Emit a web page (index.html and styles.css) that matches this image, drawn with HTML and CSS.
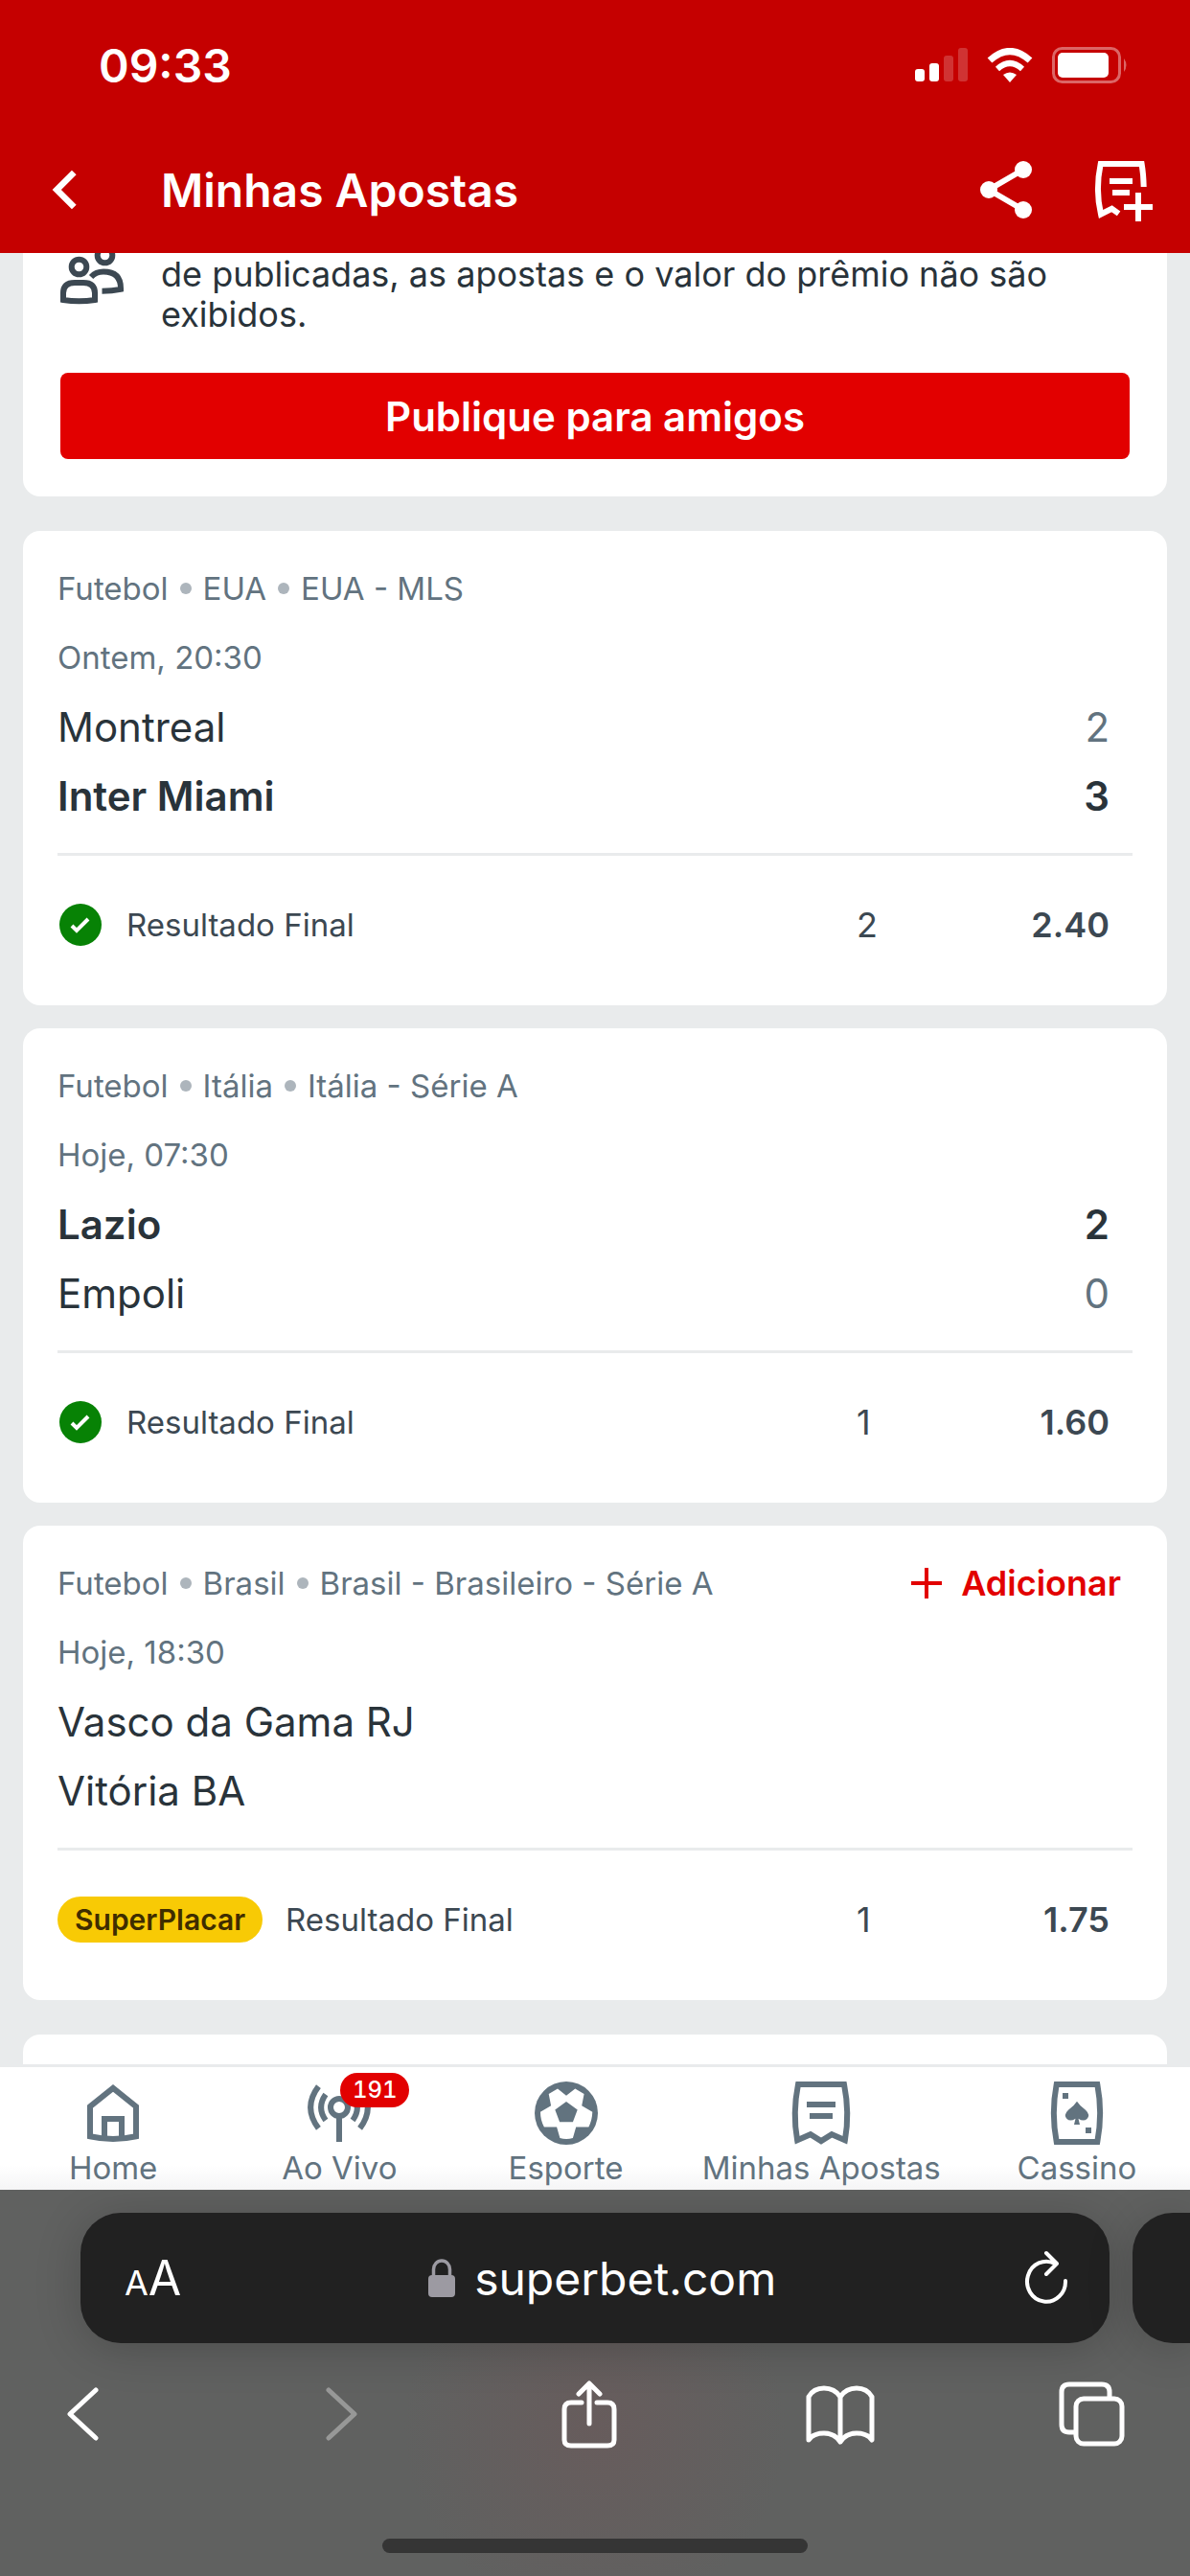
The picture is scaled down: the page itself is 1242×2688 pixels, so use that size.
FILE: index.html
```html
<!DOCTYPE html>
<html lang="pt-BR">

<head>
  <meta charset="UTF-8">
  <meta name="viewport" content="width=device-width, initial-scale=1">
  <title>Minhas Apostas</title>
  <link rel="stylesheet" href="styles.css">
</head>

<body>
  <header class="top">
    <div class="status">
      <span class="time">09:33</span>
      <div class="status-icons">
        <svg width="56" height="36" viewBox="0 0 56 36" fill="#fff">
          <rect x="1" y="22" width="10" height="13" rx="3" />
          <rect x="16" y="16" width="10" height="19" rx="3" />
          <rect x="31" y="8" width="10" height="27" rx="3" opacity=".2" />
          <rect x="46" y="0" width="10" height="35" rx="3" opacity=".2" />
        </svg>
        <svg width="48" height="36" viewBox="0 0 48 36" fill="none" stroke="#fff" stroke-width="7">
          <path d="M3 13Q24 -6 45 13" />
          <path d="M11 22Q24 10 37 22" stroke-width="6" />
          <path d="M17 28Q24 23 31 28L24 36Z" fill="#fff" stroke="none" />
        </svg>
        <svg width="80" height="38" viewBox="0 0 80 38">
          <rect x="1.5" y="1.5" width="69" height="35" rx="9" fill="none" stroke="#fff" stroke-width="3" opacity=".4" />
          <rect x="6" y="6" width="53" height="26" rx="5" fill="#fff" />
          <path d="M75 12q5 7 0 14z" fill="#fff" opacity=".4" />
        </svg>
      </div>
    </div>
    <div class="appbar">
      <button class="icon-btn" aria-label="Voltar">
        <svg class="icon" viewBox="0 0 24 24"><path d="M15.1 6l-6 6 6 6" fill="none" stroke="#fff" stroke-width="2.2" /></svg>
      </button>
      <h1>Minhas Apostas</h1>
      <button class="icon-btn" aria-label="Compartilhar">
        <svg class="icon" viewBox="0 0 24 24" fill="#fff">
          <path d="M18 5L6 12l12 7" fill="none" stroke="#fff" stroke-width="2" />
          <circle cx="18" cy="5" r="3" />
          <circle cx="6" cy="12" r="3" />
          <circle cx="18" cy="19" r="3" />
        </svg>
      </button>
      <button class="icon-btn" aria-label="Adicionar bilhete">
        <svg class="icon" viewBox="0 0 24 24" fill="none" stroke="#fff" stroke-width="2">
          <path d="M19.9 11Q19.8 6.5 19.2 3H4.9Q3 12 5 20.5L8.8 18.6L11.2 20.3" />
          <path d="M8 9h8M9 13h6M13 18h10M18 13v10" />
        </svg>
      </button>
    </div>
  </header>

  <main>
    <section class="card share-card">
      <div class="share-info">
        <svg class="icon" viewBox="0 0 24 24" fill="none" stroke="#3c4852" stroke-width="2">
          <circle cx="7.5" cy="8.5" r="2.6" />
          <circle cx="16.5" cy="4.5" r="2.6" />
          <path d="M2 20V17.6Q2 14 6 14H9Q13 14 13 17.6V20Q7.5 20.9 2 20Z" />
          <path d="M11.7 12Q13.4 10.2 16 10.2Q22 10.2 22 16V16.3Q19 16.9 15.5 16.9" />
        </svg>
        <p>de publicadas, as apostas e o valor do prêmio não são exibidos.</p>
      </div>
      <button class="publish">Publique para amigos</button>
    </section>

    <section class="bets">
      <article class="card bet">
        <div class="row meta"><span>Futebol</span><i></i><span>EUA</span><i></i><span>EUA - MLS</span></div>
        <div class="row meta">Ontem, 20:30</div>
        <div class="row team"><span>Montreal</span><span class="score">2</span></div>
        <div class="row team winner"><span>Inter Miami</span><span class="score">3</span></div>
        <div class="result">
          <svg class="check" viewBox="0 0 48 48"><circle cx="24" cy="24" r="22" fill="#078205" /><path d="M15 25l5 5 12-12" fill="none" stroke="#fff" stroke-width="4" /></svg>
          <span class="market">Resultado Final</span>
          <span class="pick">2</span>
          <strong class="odd">2.40</strong>
        </div>
      </article>

      <article class="card bet">
        <div class="row meta"><span>Futebol</span><i></i><span>Itália</span><i></i><span>Itália - Série A</span></div>
        <div class="row meta">Hoje, 07:30</div>
        <div class="row team winner"><span>Lazio</span><span class="score">2</span></div>
        <div class="row team"><span>Empoli</span><span class="score">0</span></div>
        <div class="result">
          <svg class="check" viewBox="0 0 48 48"><circle cx="24" cy="24" r="22" fill="#078205" /><path d="M15 25l5 5 12-12" fill="none" stroke="#fff" stroke-width="4" /></svg>
          <span class="market">Resultado Final</span>
          <span class="pick">1</span>
          <strong class="odd">1.60</strong>
        </div>
      </article>

      <article class="card bet">
        <div class="row meta">
          <span>Futebol</span><i></i><span>Brasil</span><i></i><span>Brasil - Brasileiro - Série A</span>
          <button class="add">
            <svg width="36" height="36" viewBox="0 0 36 36"><path d="M2 18h32M18 2v32" stroke="#e20000" stroke-width="4" /></svg>
            Adicionar
          </button>
        </div>
        <div class="row meta">Hoje, 18:30</div>
        <div class="row team"><span>Vasco da Gama RJ</span></div>
        <div class="row team"><span>Vitória BA</span></div>
        <div class="result">
          <span class="tag">SuperPlacar</span>
          <span class="market">Resultado Final</span>
          <span class="pick">1</span>
          <strong class="odd">1.75</strong>
        </div>
      </article>
    </section>

    <section class="card next-card"></section>
  </main>

  <nav class="tabs">
    <a href="#">
      <svg class="icon" viewBox="0 0 24 24"><path d="M4 9.7L12 3.3L20 9.7V20.1Q12 21.9 4 20.1Z" /><path d="M9 21V14h6v7" /></svg>
      Home
    </a>
    <a href="#">
      <span class="with-badge">
        <svg class="icon" viewBox="0 0 24 24">
          <circle cx="12" cy="10" r="3" />
          <path d="M12 13v9M7.3 5.5Q4.1 10 7.3 14.5M16.7 5.5Q19.9 10 16.7 14.5M4.8 2.7Q-.7 10 4.8 17.3M19.2 2.7Q24.7 10 19.2 17.3" />
        </svg>
        <span class="badge">191</span>
      </span>
      Ao Vivo
    </a>
    <a href="#">
      <svg class="icon" viewBox="0 0 24 24">
        <circle cx="12" cy="12" r="11" fill="#62737f" stroke="none" />
        <path d="M5.9 5.3L9 3.5L12 5.9L15.1 3.5L18.2 5.3L17.4 9.4L21.1 11.6Q21 14.5 19.8 16.8H15.4L14.3 20.7Q12 21.3 9.8 20.7L8.7 16.8H4.3Q3 14.5 3 11.6L6.7 9.4Z" fill="#fff" stroke="none" />
        <path d="M12 8L15.9 10.8L14.3 15.1H9.7L8.1 10.8Z" fill="#62737f" stroke="none" />
      </svg>
      Esporte
    </a>
    <a href="#">
      <svg class="icon" viewBox="0 0 24 24"><path d="M4 2H20Q22 12 20.3 21.4L15.7 19.4L12 21.7L8.3 19.4L3.7 21.4Q2 12 4 2Z" /><path d="M7 9h10M8 13h8" /></svg>
      Minhas Apostas
    </a>
    <a href="#">
      <svg class="icon" viewBox="0 0 24 24">
        <path d="M4.9 2H19.1Q21 12 19.1 22H4.9Q3 12 4.9 2Z" />
        <path d="M7 5h2v2H7zM15 17h2v2h-2zM12 7.9Q13 9.5 15 10.9Q16.8 12.6 15.5 14Q14.3 15.1 12.5 13.9L13 16H11L11.5 13.9Q9.7 15.1 8.5 14Q7.2 12.6 9 10.9Q11 9.5 12 7.9Z" fill="#62737f" stroke="none" />
      </svg>
      Cassino
    </a>
  </nav>

  <footer class="browser">
    <div class="address-row">
      <div class="address">
        <button class="text-size" aria-label="Tamanho do texto"><small>A</small>A</button>
        <div class="site">
          <svg width="28" height="40" viewBox="0 0 28 40"><rect x="0" y="17" width="28" height="23" rx="4" fill="#9c9aa2" /><path d="M5.5 18V11a8.5 9 0 0 1 17 0V18" fill="none" stroke="#9c9aa2" stroke-width="3.5" /></svg>
          superbet.com
        </div>
        <button class="reload" aria-label="Recarregar">
          <svg width="48" height="56" viewBox="0 0 48 56"><path d="M44 32A20 21 0 1 1 33 14M24 3l11 11-11 11" fill="none" stroke="#fff" stroke-width="4" stroke-linecap="round" stroke-linejoin="round" /></svg>
        </button>
      </div>
      <div class="address next-tab"></div>
    </div>
    <div class="toolbar">
      <button aria-label="Página anterior"><svg class="icon" viewBox="0 0 72 72"><path d="M50 11L23 36l27 25" /></svg></button>
      <button aria-label="Próxima página" disabled><svg class="icon" viewBox="0 0 72 72"><path d="M30 11l27 25-27 25" /></svg></button>
      <button aria-label="Compartilhar página"><svg class="icon" viewBox="0 0 72 72"><path d="M30 24H19q-7 0-7 7v32q0 6 7 6h38q7 0 7-6V31q0-7-7-7H46M38 46V4M27 15L38 4l11 11" /></svg></button>
      <button aria-label="Favoritos"><svg class="icon" viewBox="0 0 72 72"><path d="M37 18Q31 9 20 9T4 18V63Q9 56 20 56t17 9q6-9 17-9t16 7V18Q65 9 54 9T37 18V65" /></svg></button>
      <button aria-label="Abas"><svg class="icon" viewBox="0 0 72 72"><path d="M19 55h-6q-8 0-8-8V13q0-8 8-8h34q8 0 8 8v6" /><rect x="20" y="20" width="48" height="47" rx="8" /></svg></button>
    </div>
    <div class="home-bar"></div>
  </footer>
</body>

</html>
```
FILE: styles.css
```css
* {
  box-sizing: border-box;
}

body {
  display: flex;
  flex-direction: column;
  height: 100vh;
  margin: 0;
  overflow: hidden;
  background: #e9ebec;
  color: #29333a;
  font-family: Inter, "Liberation Sans", sans-serif;
  font-size: 33px;
}

button {
  padding: 0;
  border: 0;
  background: none;
  color: inherit;
  font-family: inherit;
}

.icon {
  display: block;
  width: 72px;
  height: 72px;
  flex: none;
  overflow: visible;
}

/* header */

.top {
  flex: none;
  background: #c50000;
  color: #fff;
}

.status {
  display: flex;
  align-items: center;
  justify-content: space-between;
  height: 132px;
  padding: 4px 64px 0 103px;
}

.time {
  font-size: 48px;
  font-weight: 600;
}

.status-icons {
  display: flex;
  align-items: center;
  gap: 20px;
}

.appbar {
  display: flex;
  align-items: center;
  height: 132px;
  padding: 0 36px 0 32px;
  gap: 48px;
}

h1 {
  flex: 1;
  margin: 0 0 0 16px;
  font-size: 48px;
  font-weight: 600;
}

/* content */

main {
  flex: 1;
  min-height: 0;
  overflow: hidden;
  padding: 0 24px;
}

.card {
  background: #fff;
  border-radius: 18px;
}

.share-card {
  padding: 1px 39px 39px;
  margin-bottom: 36px;
  border-radius: 0 0 18px 18px;
}

.share-info {
  display: flex;
  gap: 36px;
  margin: 0 -3px 40px;
}

.share-info .icon {
  margin-top: -12px;
}

.share-info p {
  margin: 0;
  font-size: 36px;
  line-height: 42px;
}

.publish {
  display: block;
  width: 100%;
  height: 90px;
  border-radius: 8px;
  background: #e20000;
  color: #fff;
  font-size: 42px;
  font-weight: 600;
}

.bets {
  display: flex;
  flex-direction: column;
  gap: 24px;
}

.bet {
  padding: 24px 36px 48px;
}

.row {
  display: flex;
  align-items: center;
  height: 72px;
}

.meta {
  gap: 12px;
  color: #62737f;
}

.meta i {
  width: 12px;
  height: 12px;
  border-radius: 50%;
  background: #adb5bc;
}

.team {
  justify-content: space-between;
  padding-right: 24px;
  font-size: 42px;
}

.score {
  color: #62737f;
}

.winner,
.winner .score {
  color: #29333a;
  font-weight: 600;
}

.add {
  display: flex;
  align-items: center;
  gap: 18px;
  margin-left: auto;
  padding-right: 12px;
  color: #e20000;
  font-size: 36px;
  font-weight: 600;
}

.result {
  display: flex;
  align-items: center;
  height: 111px;
  margin-top: 24px;
  padding: 36px 24px 0 0;
  border-top: 3px solid #e9ebec;
  color: #3c4852;
}

.check {
  width: 48px;
  height: 48px;
}

.tag {
  padding: 0 18px;
  border-radius: 24px;
  background: #f8ca05;
  color: #3f2d00;
  font-size: 30px;
  font-weight: 600;
  line-height: 48px;
}

.market {
  flex: 1;
  margin-left: 24px;
}

.pick,
.odd {
  width: 132px;
  font-size: 36px;
}

.odd {
  font-weight: 600;
  text-align: right;
}

.next-card {
  height: 300px;
  margin-top: 36px;
}

/* bottom navigation */

.tabs {
  display: flex;
  flex: none;
  height: 131px;
  padding-top: 12px;
  border-top: 3px solid #e9ebec;
  background: linear-gradient(#fff 80%, #f5f5f6);
}

.tabs a {
  display: flex;
  flex: 1;
  flex-direction: column;
  align-items: center;
  padding: 0 24px;
  color: #62737f;
  line-height: 42px;
  text-decoration: none;
  white-space: nowrap;
}

.tabs .icon {
  fill: none;
  stroke: #62737f;
  stroke-width: 2;
}

.with-badge {
  position: relative;
}

.badge {
  position: absolute;
  top: -6px;
  left: 37px;
  width: 72px;
  border-radius: 18px;
  background: #e20000;
  color: #fff;
  font-size: 24px;
  font-variant-numeric: tabular-nums;
  font-weight: 500;
  line-height: 36px;
  text-align: center;
}

/* browser chrome */

.browser {
  flex: none;
  height: 403px;
  padding-top: 24px;
  overflow: hidden;
  background: radial-gradient(circle at 50% 62%, #675c5c, rgba(96, 97, 96, 0) 200px), #606160;
  color: #fff;
}

.address-row {
  display: flex;
  gap: 24px;
  padding-left: 84px;
}

.address {
  display: flex;
  flex: 1;
  align-items: center;
  justify-content: space-between;
  height: 136px;
  padding: 0 42px 0 46px;
  border-radius: 42px;
  background: #212121;
  box-shadow: 0 6px 48px rgba(0, 0, 0, 0.2);
}

.next-tab {
  flex: none;
  width: 60px;
  padding: 0;
  border-radius: 42px 0 0 42px;
}

.text-size {
  font-size: 50px;
}

.text-size small {
  font-size: 36px;
}

.site {
  display: flex;
  align-items: center;
  gap: 20px;
  font-size: 48px;
}

.toolbar {
  display: flex;
  justify-content: space-between;
  margin-top: 38px;
  padding: 0 67px 0 50px;
}

.toolbar .icon {
  fill: none;
  stroke: #fff;
  stroke-width: 5;
  stroke-linecap: round;
  stroke-linejoin: round;
}

.toolbar button:disabled {
  opacity: 0.35;
}

.home-bar {
  width: 444px;
  height: 15px;
  margin: 94px auto 0;
  border-radius: 8px;
  background: #353535;
}
```
